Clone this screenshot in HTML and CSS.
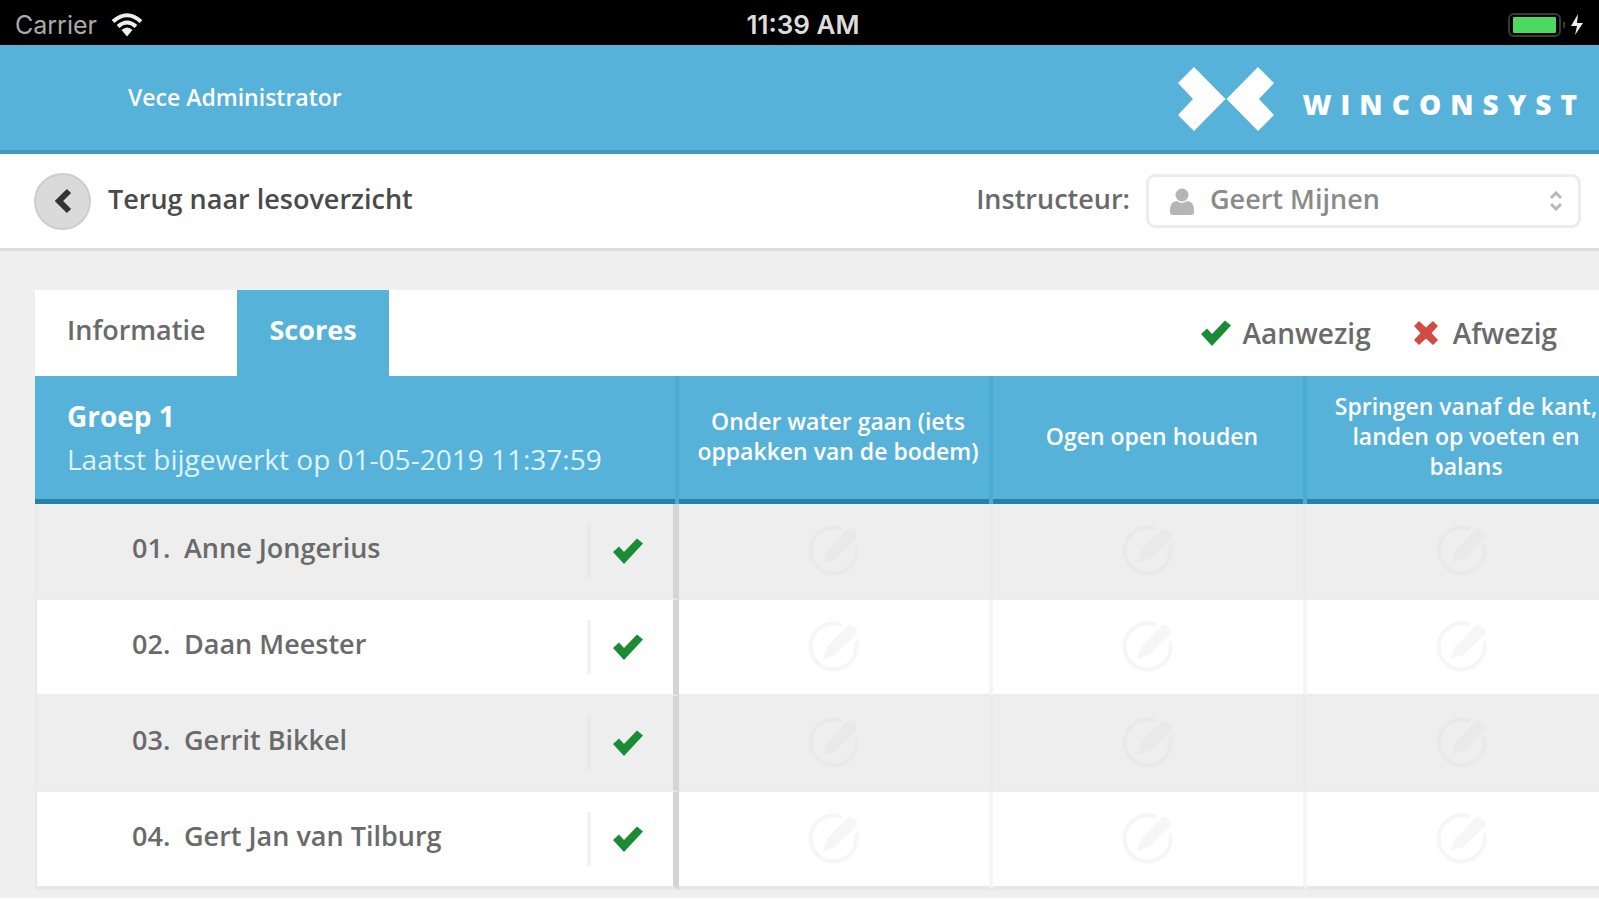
FILE: index.html
```html
<!DOCTYPE html>
<html lang="nl">
<head>
<meta charset="utf-8">
<meta name="viewport" content="width=device-width, initial-scale=1">
<title>Scores</title>
<link rel="stylesheet" href="styles.css">
</head>
<body>
<svg class="sprite" aria-hidden="true">
  <symbol id="check" viewBox="0 0 32 28"><path d="M1 15 7 9.500 12 15 25 1.500 31 6.500 12 27Z"/></symbol>
  <symbol id="cross" viewBox="0 0 26 26"><path d="M6 1 13 7.500 20 1 25 6 18.500 13 25 20 20 25 13 18.500 6 25 1 20 7.500 13 1 6Z"/></symbol>
  <symbol id="edit" viewBox="0 0 52 52"><path class="ring" d="M34 4A23 23 0 1 0 48 20"/><path d="M15 38 19 26 38 6Q41 2 45 5L48 8Q51 11 47 15L27 34Z"/></symbol>
</svg>

<div class="statusbar">
  <div class="carrier">
    <span>Carrier</span>
    <svg class="wifi" viewBox="0 0 32 24" aria-hidden="true"><path d="M2 8.500Q16-4 30 8.500M7 13.500Q16 5.500 25 13.500"/><path class="solid" d="M10.500 17Q16 12 21.500 17L16 23.500Z"/></svg>
  </div>
  <time>11:39 AM</time>
  <div class="power">
    <svg class="battery" viewBox="0 0 78 26" aria-hidden="true"><rect class="case" x="2" y="2" width="51" height="22" rx="5"/><rect class="charge" x="6" y="5" width="43" height="16" rx="1"/><path class="case" d="M57 10v6"/><path class="bolt" d="M71 2 64 14h6l-2 9 8-12h-6Z"/></svg>
  </div>
</div>

<header class="header">
  <span class="user">Vece Administrator</span>
  <div class="brand">
    <svg class="logo" viewBox="0 0 96 64" aria-hidden="true"><path d="M16 0 47.500 32 16 64 0 48 15 32 0 16ZM80 0 96 16 81 32 96 48 80 64 48.500 32Z"/></svg>
    <span class="wordmark">WINCONSYST</span>
  </div>
</header>

<nav class="toolbar">
  <a class="back" href="#">
    <span class="back-icon"><svg viewBox="0 0 18 26" aria-hidden="true"><path d="M15 3 5 13 15 23"/></svg></span>
    <span class="back-label">Terug naar lesoverzicht</span>
  </a>
  <div class="instructor">
    <label for="instructor">Instructeur:</label>
    <div class="picker">
      <svg class="person" viewBox="0 0 24 27" aria-hidden="true"><circle cx="12" cy="7" r="6.500"/><path d="M0 23Q0 13 7 13Q12 17 17 13Q24 13 24 23V24Q24 27 21 27H3Q0 27 0 24Z"/></svg>
      <select id="instructor"><option>Geert Mijnen</option></select>
      <svg class="arrows" viewBox="0 0 14 20" aria-hidden="true"><path d="M2 7 7 2 12 7M2 13 7 18 12 13"/></svg>
    </div>
  </div>
</nav>

<main class="content">
  <div class="tabs">
    <button class="tab" type="button">Informatie</button>
    <button class="tab active" type="button">Scores</button>
    <div class="legend">
      <span class="key"><svg class="check"><use href="#check"/></svg>Aanwezig</span>
      <span class="key"><svg class="cross"><use href="#cross"/></svg>Afwezig</span>
    </div>
  </div>
  <table class="scores">
    <colgroup><col class="col-name"><col class="col-score"><col class="col-score"><col class="col-score"></colgroup>
    <thead>
      <tr>
        <th class="group" scope="col"><strong>Groep 1</strong><span>Laatst bijgewerkt op 01-05-2019 11:37:59</span></th>
        <th scope="col">Onder water gaan (iets<br>oppakken van de bodem)</th>
        <th scope="col">Ogen open houden</th>
        <th scope="col">Springen vanaf de kant,<br>landen op voeten en<br>balans</th>
      </tr>
    </thead>
    <tbody>
      <tr>
        <td><div class="pupil"><span class="number">01.</span><span class="name">Anne Jongerius</span><button class="presence" type="button" aria-label="Aanwezig"><svg class="check"><use href="#check"/></svg></button></div></td>
        <td><button class="edit" type="button" aria-label="Score"><svg><use href="#edit"/></svg></button></td>
        <td><button class="edit" type="button" aria-label="Score"><svg><use href="#edit"/></svg></button></td>
        <td><button class="edit" type="button" aria-label="Score"><svg><use href="#edit"/></svg></button></td>
      </tr>
      <tr>
        <td><div class="pupil"><span class="number">02.</span><span class="name">Daan Meester</span><button class="presence" type="button" aria-label="Aanwezig"><svg class="check"><use href="#check"/></svg></button></div></td>
        <td><button class="edit" type="button" aria-label="Score"><svg><use href="#edit"/></svg></button></td>
        <td><button class="edit" type="button" aria-label="Score"><svg><use href="#edit"/></svg></button></td>
        <td><button class="edit" type="button" aria-label="Score"><svg><use href="#edit"/></svg></button></td>
      </tr>
      <tr>
        <td><div class="pupil"><span class="number">03.</span><span class="name">Gerrit Bikkel</span><button class="presence" type="button" aria-label="Aanwezig"><svg class="check"><use href="#check"/></svg></button></div></td>
        <td><button class="edit" type="button" aria-label="Score"><svg><use href="#edit"/></svg></button></td>
        <td><button class="edit" type="button" aria-label="Score"><svg><use href="#edit"/></svg></button></td>
        <td><button class="edit" type="button" aria-label="Score"><svg><use href="#edit"/></svg></button></td>
      </tr>
      <tr>
        <td><div class="pupil"><span class="number">04.</span><span class="name">Gert Jan van Tilburg</span><button class="presence" type="button" aria-label="Aanwezig"><svg class="check"><use href="#check"/></svg></button></div></td>
        <td><button class="edit" type="button" aria-label="Score"><svg><use href="#edit"/></svg></button></td>
        <td><button class="edit" type="button" aria-label="Score"><svg><use href="#edit"/></svg></button></td>
        <td><button class="edit" type="button" aria-label="Score"><svg><use href="#edit"/></svg></button></td>
      </tr>
    </tbody>
  </table>
</main>
</body>
</html>
```
FILE: styles.css
```css
* { box-sizing: border-box; }

body {
  margin: 0;
  overflow-x: hidden;
  background: #fff;
  color: #6a6a6a;
  font: 600 27px/32px "Open Sans", "Noto Sans", sans-serif;
}

svg { display: block; }
.sprite { display: none; }

button, select {
  margin: 0;
  padding: 0;
  border: 0;
  background: none;
  color: inherit;
  font: inherit;
}

.statusbar {
  display: grid;
  grid-template-columns: 1fr auto 1fr;
  align-items: center;
  height: 45px;
  padding: 4px 14px 0 15px;
  background: #000;
  color: #aaa;
  font: 400 25px/32px Inter, "Liberation Sans", sans-serif;
}
.statusbar time { padding-left: 6px; color: #ddd; font-size: 26px; font-weight: 600; }
.carrier { display: flex; align-items: center; gap: 14px; }
.wifi { width: 32px; height: 24px; fill: none; stroke: #eee; stroke-width: 4; }
.wifi .solid { fill: #eee; stroke: none; }
.power { display: flex; justify-content: flex-end; }
.battery { width: 78px; height: 26px; }
.battery .case { fill: none; stroke: #3a3a3a; stroke-width: 2; }
.battery .charge { fill: #4bd963; }
.battery .bolt { fill: #eee; }

.header {
  display: flex;
  align-items: center;
  justify-content: space-between;
  height: 109px;
  padding: 3px 13px 0 128px;
  border-bottom: 4px solid #3d9cc2;
  background: #56b2d9;
  color: #fff;
}
.user { padding-bottom: 4px; font-size: 23px; }
.brand { display: flex; align-items: center; gap: 29px; }
.logo { width: 96px; height: 64px; fill: #fff; }
.wordmark { padding-top: 10px; font-size: 28px; font-weight: 800; letter-spacing: 9px; }

.toolbar {
  display: flex;
  align-items: center;
  justify-content: space-between;
  height: 97px;
  padding: 0 18px 0 34px;
  border-bottom: 3px solid #dcdcdc;
}
.back {
  display: flex;
  align-items: center;
  gap: 17px;
  color: #4a4a4a;
  text-decoration: none;
}
.back-label, .instructor label { padding-bottom: 4px; }
.back-icon {
  display: grid;
  place-items: center;
  width: 57px;
  height: 57px;
  border: 2px solid #cdcdcd;
  border-radius: 50%;
  background: #dadada;
}
.back-icon svg { width: 18px; height: 26px; fill: none; stroke: #333; stroke-width: 6; }
.instructor { display: flex; align-items: center; gap: 16px; }
.picker { display: grid; align-items: center; width: 435px; }
.picker > * { grid-area: 1 / 1; }
.picker select {
  width: 100%;
  height: 54px;
  padding: 0 48px 4px 61px;
  border: 3px solid #ececec;
  border-radius: 9px;
  appearance: none;
  color: #8a8a8a;
  line-height: 42px;
}
.person { width: 24px; height: 27px; margin-left: 24px; fill: #b5b5b5; }
.arrows { justify-self: end; width: 14px; height: 20px; margin-right: 18px; fill: none; stroke: #b8b8b8; stroke-width: 3; }

.content {
  padding: 39px 0 8px 35px;
  background: #efefef;
  overflow: hidden;
}
.tabs { display: flex; height: 86px; background: #fff; }
.tab { padding: 0 32px 6px; }
.tab.active { background: #56b2d9; color: #fff; font-weight: 700; }
.legend { display: flex; align-items: center; gap: 42px; margin-left: auto; padding-right: 42px; font-size: 28px; }
.key { display: flex; align-items: center; gap: 10px; }
.check { width: 32px; height: 28px; fill: #1b8c34; }
.cross { width: 26px; height: 26px; margin-right: 4px; fill: #d14b42; }

.scores {
  width: 1586px;
  border-collapse: separate;
  border-spacing: 0;
  table-layout: fixed;
  background: #fff;
}
.col-name { width: 644px; }
th {
  height: 128px;
  padding: 0 0 4px 8px;
  border-right: 4px solid #48acd5;
  background: #56b2d9;
  box-shadow: inset 0 -5px #2583aa;
  color: #fff;
  font-size: 23px;
  font-weight: 600;
  line-height: 30px;
  white-space: nowrap;
}
th { padding-bottom: 9px; }
.group { padding: 0 0 5px 32px; font-size: 28px; line-height: 43px; text-align: left; }
.group strong { display: block; font-weight: 700; }
.group span { color: #dff2fa; font-weight: 400; }
td {
  height: 96px;
  padding: 0;
  border-right: 4px solid #f5f5f5;
  border-bottom: 2px solid #ececec;
}
td:first-child { border-right: 6px solid #d5d5d5; border-left: 2px solid #e9e9e9; }
tbody tr:nth-child(odd) { background: #eee; }
tbody tr:nth-child(odd) td:not(:first-child) { border-right-color: #eaeaea; }
tbody tr:last-child td { height: 98px; border-bottom-width: 4px; border-bottom-color: #e8e8e8; }
.pupil { display: flex; align-items: center; padding-left: 95px; }
.number { width: 52px; }
.name { flex: 1; }
.number, .name { padding-bottom: 6px; }
.presence { display: grid; place-items: center; width: 86px; height: 54px; padding-right: 8px; border-left: 4px solid #f3f3f3; }
tbody tr:nth-child(odd) .presence { border-color: #e9e9e9; }
.edit { display: block; margin: 0 auto; color: #f6f6f6; }
.edit svg { width: 52px; height: 52px; fill: currentColor; }
.ring { fill: none; stroke: currentColor; stroke-width: 4; }
tbody tr:nth-child(odd) .edit { color: #e9e9e9; }
```
